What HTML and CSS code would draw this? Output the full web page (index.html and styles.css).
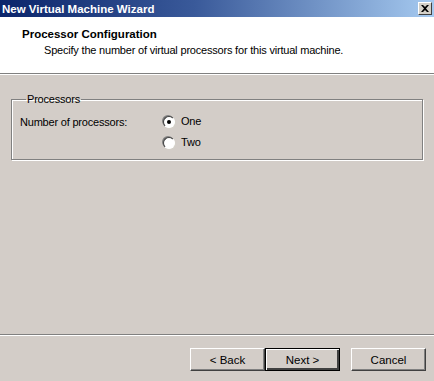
FILE: index.html
```html
<!DOCTYPE html>
<html lang="en">
<head>
    <meta charset="UTF-8">
    <title>New Virtual Machine Wizard</title>
    <link rel="stylesheet" href="styles.css">
</head>
<body>
    <div class="window">
        <!-- Title bar -->
        <div class="titlebar">
            <span class="title">New Virtual Machine Wizard</span>
            <span class="close-btn">
                <svg width="8" height="7" viewBox="0 0 8 7"><path d="M0 0h2l2 2 2-2h2L5 3.5 8 7H6L4 5 2 7H0l3-3.5z" fill="#000"/></svg>
            </span>
        </div>

        <!-- Header -->
        <div class="header">
            <div class="header-title">Processor Configuration</div>
            <div class="header-sub">Specify the number of virtual processors for this virtual machine.</div>
        </div>

        <!-- Body -->
        <div class="body">
            <fieldset class="group">
                <legend>Processors</legend>
                <div class="row">
                    <span class="label">Number of processors:</span>
                    <div class="radios">
                        <label class="radio"><span class="dot checked"></span>One</label>
                        <label class="radio"><span class="dot"></span>Two</label>
                    </div>
                </div>
            </fieldset>
        </div>

        <!-- Buttons -->
        <div class="footer">
            <button class="btn">&lt; Back</button>
            <button class="btn default">Next &gt;</button>
            <button class="btn cancel">Cancel</button>
        </div>
    </div>
</body>
</html>
```

FILE: styles.css
```css
/* Reset */
html, body {
    margin: 0;
    padding: 0;
    width: 434px;
    height: 381px;
    overflow: hidden;
    font-family: 'Liberation Sans', Arial, sans-serif;
    font-size: 11px;
    letter-spacing: -0.2px;
    color: #000;
}

body {
    background-color: #d3cdc8;
}

.window {
    display: flex;
    flex-direction: column;
    height: 381px;
}

/* Title bar */
.titlebar {
    height: 17px;
    display: flex;
    align-items: center;
    justify-content: space-between;
    padding: 0 2px 0 2px;
    background: linear-gradient(to right, #0a246a 0%, #3a5a9a 45%, #a6caf0 100%);
}

.title {
    color: #fff;
    font-weight: bold;
    font-size: 11.5px;
    letter-spacing: 0;
}

.close-btn {
    width: 14px;
    height: 13px;
    box-sizing: border-box;
    background: #d4d0c8;
    border-top: 1px solid #fff;
    border-left: 1px solid #fff;
    border-right: 1px solid #404040;
    border-bottom: 1px solid #404040;
    display: flex;
    align-items: center;
    justify-content: center;
}

/* Header */
.header {
    height: 57px;
    box-sizing: border-box;
    background: #fff;
    padding: 11px 0 0 22px;
    border-bottom: 1px solid #808080;
    box-shadow: 0 1px 0 #fff;
}

.header-title {
    font-weight: bold;
    font-size: 11.5px;
    letter-spacing: 0;
    line-height: 13px;
}

.header-sub {
    margin-top: 3px;
    padding-left: 22px;
    line-height: 13px;
}

/* Body */
.body {
    flex: 1;
    padding: 18px 11px 0 11px;
    border-bottom: 1px solid #808080;
    box-shadow: 0 1px 0 #fff;
    margin-top: 1px;
}

.group {
    margin: 0;
    padding: 7px 8px 8px 8px;
    height: 67px;
    box-sizing: border-box;
    border: 1px solid #808080;
    box-shadow: inset 1px 1px 0 #fff, 1px 1px 0 #fff;
}

.group legend {
    padding: 0 1px;
    margin-left: 6px;
    line-height: 13px;
}

.row {
    display: flex;
    align-items: flex-start;
}

.label {
    width: 143px;
    line-height: 13px;
    margin-top: 3px;
}

.radios {
    display: flex;
    flex-direction: column;
    gap: 8px;
    margin-top: 2px;
}

.radio {
    display: flex;
    align-items: center;
    line-height: 13px;
}

.dot {
    width: 12px;
    height: 12px;
    box-sizing: border-box;
    border-radius: 50%;
    background: #fff;
    border: 1px solid;
    border-color: #404040 #fff #fff #404040;
    box-shadow: -1px -1px 0 #808080, 1px 1px 0 #d4d0c8;
    margin-right: 6px;
    position: relative;
}

.dot.checked::after {
    content: "";
    position: absolute;
    left: 3px;
    top: 3px;
    width: 4px;
    height: 4px;
    border-radius: 50%;
    background: #000;
}

/* Footer buttons */
.footer {
    height: 46px;
    box-sizing: border-box;
    display: flex;
    padding: 13px 0 0 190px;
}

.btn {
    width: 75px;
    height: 23px;
    box-sizing: border-box;
    font-family: 'Liberation Sans', Arial, sans-serif;
    font-size: 11.5px;
    color: #000;
    background: transparent;
    border: 1px solid;
    border-color: #fff #404040 #404040 #fff;
    box-shadow: inset -1px -1px 0 #808080;
    padding: 0;
}

.btn.default {
    border: 1px solid #000;
    box-shadow: inset 1px 1px 0 #fff, inset -2px -2px 0 #404040;
}

.btn.cancel {
    margin-left: 11px;
}
```
